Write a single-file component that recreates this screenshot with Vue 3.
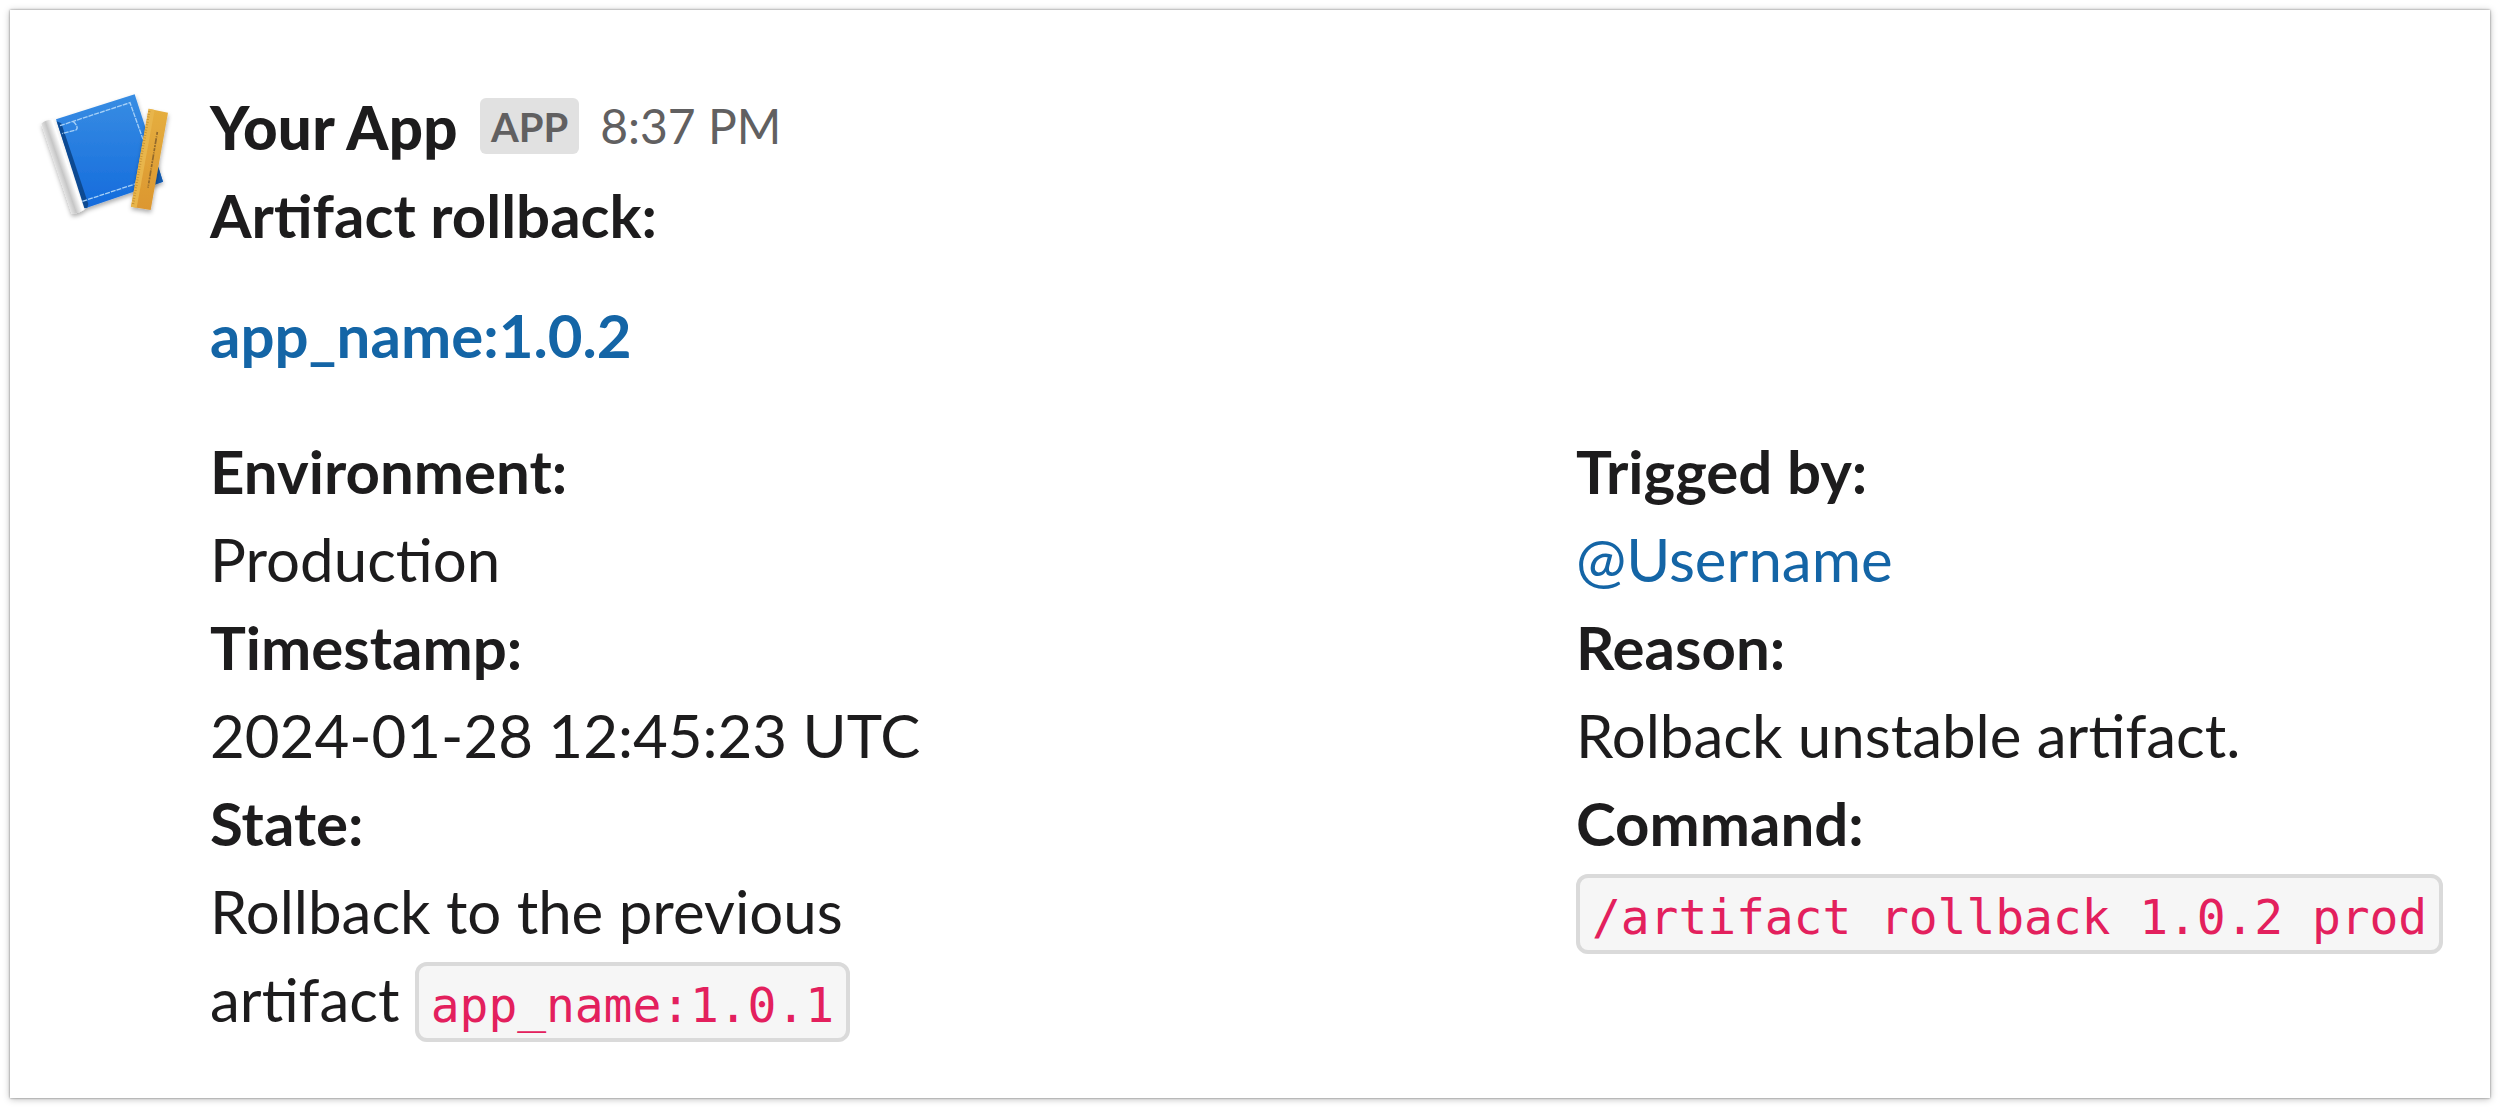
<script setup>
const left = [
  { label: 'Environment:', lines: ['Production'] },
  { label: 'Timestamp:', lines: ['2024-01-28 12:45:23 UTC'] },
  { label: 'State:', lines: ['Rollback to the previous', 'artifact '], code: 'app_name:1.0.1' },
]
const right = [
  { label: 'Trigged by:', link: '@Username' },
  { label: 'Reason:', lines: ['Rolback unstable artifact.'] },
  { label: 'Command:', lines: [''], code: '/artifact rollback 1.0.2 prod' },
]
</script>

<template>
  <main class="page">
    <article class="message">
      <svg class="avatar" viewBox="102 249 432 432" aria-hidden="true">
        <defs>
          <linearGradient id="cover" x1="0" y1="0" x2="0" y2="1">
            <stop offset="0" stop-color="#388de3" />
            <stop offset="1" stop-color="#146bdc" />
          </linearGradient>
          <linearGradient id="pages" gradientUnits="userSpaceOnUse" x1="167" y1="500" x2="211" y2="485">
            <stop offset="0" stop-color="#e2e2e2" />
            <stop offset="0.3" stop-color="#c6c6c6" />
            <stop offset="0.75" stop-color="#ffffff" />
            <stop offset="1" stop-color="#f0f0f0" />
          </linearGradient>
          <linearGradient id="wood" x1="0" y1="0" x2="0" y2="1">
            <stop offset="0" stop-color="#e5ae3f" />
            <stop offset="1" stop-color="#dc9730" />
          </linearGradient>
          <filter id="shade" x="-20%" y="-20%" width="140%" height="140%">
            <feDropShadow dx="1" dy="8" stdDeviation="6" flood-color="#000" flood-opacity="0.32" />
          </filter>
        </defs>
        <g filter="url(#shade)">
          <path d="M124 371Q138 356 168 360L258 623Q244 640 215 641Z" fill="url(#pages)" />
          <path d="M168 358L404 283L489 545L256 625Z" fill="url(#cover)" />
        </g>
        <path d="M170 364L184 370L265 612L262 623L253 625Z" fill="#0d4a92" />
        <path d="M180 377L390 308L429 418M219 364Q238 382 228 390L186 401M247 604L408 551" fill="none" stroke="#a6d0f7" stroke-width="4" stroke-dasharray="15 3" />
        <path d="M475 500L489 545L464 554Z" fill="#155bad" />
        <g filter="url(#shade)">
          <path d="M446 326L504 338L452 630L393 620Z" fill="url(#wood)" />
        </g>
        <path d="M446 326L464 330L410 623L393 620Z" fill="#e8b54b" />
        <path d="M448 334L399 614" stroke="#b9852b" stroke-width="7" stroke-dasharray="2 6" fill="none" />
        <path d="M472 396L444 563" stroke="#92692c" stroke-width="5" stroke-dasharray="9 4 3 3 18 3 6 3" fill="none" />
      </svg>

      <div class="body">
        <header class="head">
          <span class="name">Your App</span>
          <span class="badge">APP</span>
          <span class="time">8:37 PM</span>
        </header>
        <p class="strong">Artifact rollback:</p>
        <p class="artifact"><a>app_name:1.0.2</a></p>
        <div class="fields">
          <dl v-for="(column, c) in [left, right]" :key="c">
            <template v-for="field in column" :key="field.label">
              <dt>{{ field.label }}</dt>
              <dd>
                <a v-if="field.link">{{ field.link }}</a>
                <template v-for="(line, i) in field.lines" :key="i"><br v-if="i">{{ line }}</template><code v-if="field.code">{{ field.code }}</code>
              </dd>
            </template>
          </dl>
        </div>
      </div>
    </article>
  </main>
</template>

<style>
body {
  margin: 0;
  background: #fff;
}
</style>

<style scoped>
.page {
  box-sizing: border-box;
  height: 1108px;
  padding: 10px;
  font: 400 60px/88px Lato, sans-serif;
  color: #1d1c1d;
}
.message {
  display: flex;
  gap: 32px;
  box-sizing: border-box;
  height: 1088px;
  padding: 73px 0 0 24px;
  background: #fff;
  box-shadow: 0 0 2px rgba(0, 0, 0, 0.45), 0 1px 7px rgba(0, 0, 0, 0.28);
}
.avatar {
  flex: none;
  width: 144px;
  height: 144px;
}
.body {
  flex: 1;
}
.head {
  display: flex;
  height: 88px;
}
.name {
  font-weight: 900;
  letter-spacing: 0.3px;
}
.badge {
  height: 56px;
  margin: 15px 0 0 22px;
  padding: 0 11px;
  border-radius: 6px;
  background: #e1e1e1;
  color: #616061;
  font-size: 40px;
  font-weight: 700;
  line-height: 58px;
}
.time {
  margin-left: 21px;
  color: #616061;
  font-size: 48px;
  line-height: 86px;
}
p,
dl,
dd {
  margin: 0;
}
.strong,
.artifact,
dt {
  font-weight: 700;
}
.artifact {
  margin: 32px 0 48px;
}
a {
  color: #1465a6;
}
.fields {
  display: grid;
  grid-template-columns: 1366px 1fr;
}
code {
  padding: 11px 12px 5px;
  border: 4px solid #dadada;
  border-radius: 12px;
  background: #f6f6f6;
  color: #e3205d;
  font-family: "DejaVu Sans Mono", monospace;
  font-size: 48px;
  letter-spacing: -0.1px;
  line-height: 0;
}
</style>
